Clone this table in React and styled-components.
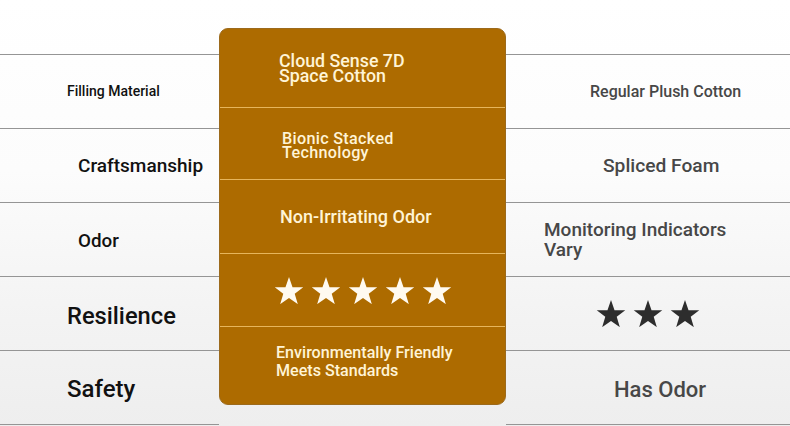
import React from "react";
import styled, { createGlobalStyle } from "styled-components";

const Global = createGlobalStyle`
  html, body { margin: 0; padding: 0; }
  body { font-family: Roboto, "Liberation Sans", sans-serif; }
`;

const Page = styled.div`
  display: flex;
  width: 790px;
  height: 426px;
  overflow: hidden;
  background: linear-gradient(180deg, #ffffff 0%, #fcfcfc 40%, #f3f3f3 75%, #eeeeee 100%);
`;

const SideColumn = styled.div`
  display: flex;
  flex-direction: column;
  padding-top: 54px;
  ${(p) => (p.$width ? `width: ${p.$width}px;` : "flex: 1;")}
`;

const Rows = styled.div`
  display: flex;
  flex-direction: column;
  border-bottom: 1px solid #959595;
`;

const Row = styled.div`
  box-sizing: border-box;
  height: 74px;
  border-top: 1px solid #959595;
  display: flex;
  align-items: center;
  padding-left: ${(p) => p.$pad}px;
  padding-top: ${(p) => p.$shift || 0}px;
`;

const Label = styled.div`
  font-size: ${(p) => p.$size}px;
  font-weight: 500;
  line-height: ${(p) => p.$lh || 1.2};
  color: ${(p) => p.$color || "#111"};
  white-space: nowrap;
`;

const Panel = styled.div`
  box-sizing: border-box;
  width: 287px;
  height: 377px;
  margin-top: 28px;
  background: #ad6b00;
  border: 1px solid #9c6a1c;
  border-radius: 9px;
  display: flex;
  flex-direction: column;
  overflow: hidden;
`;

const PanelRow = styled.div`
  box-sizing: border-box;
  height: ${(p) => p.$h}px;
  display: flex;
  align-items: center;
  padding-left: ${(p) => p.$pad}px;
  padding-top: ${(p) => p.$top || 0}px;
  padding-bottom: ${(p) => p.$bottom || 0}px;
  & + & {
    border-top: 1px solid #e6b55c;
  }
`;

const PanelText = styled.div`
  font-size: ${(p) => p.$size}px;
  font-weight: 500;
  line-height: ${(p) => p.$lh};
  color: #fff4d6;
  letter-spacing: ${(p) => p.$ls || 0}px;
  white-space: nowrap;
`;

const Stars = styled.div`
  display: flex;
  gap: ${(p) => p.$gap}px;
`;

function Star({ size, color }) {
  const R = size / 2;
  const r = R * 0.4;
  const pts = [];
  for (let i = 0; i < 10; i++) {
    const rad = i % 2 === 0 ? R : r;
    const a = (Math.PI / 5) * i - Math.PI / 2;
    pts.push(`${(R + rad * Math.cos(a)).toFixed(2)},${(R + rad * Math.sin(a)).toFixed(2)}`);
  }
  const h = R * (1 + Math.cos(Math.PI / 5));
  return (
    <svg width={size} height={h} viewBox={`0 0 ${size} ${h}`}>
      <polygon points={pts.join(" ")} fill={color} />
    </svg>
  );
}

function StarRow({ count, size, gap, color }) {
  return (
    <Stars $gap={gap}>
      {Array.from({ length: count }).map((_, i) => (
        <Star key={i} size={size} color={color} />
      ))}
    </Stars>
  );
}

export default function App() {
  return (
    <>
      <Global />
      <Page>
        <SideColumn $width={219}>
          <Rows>
            <Row $pad={67}>
              <Label $size={14}>Filling Material</Label>
            </Row>
            <Row $pad={78} $shift={1}>
              <Label $size={19}>Craftsmanship</Label>
            </Row>
            <Row $pad={78} $shift={3}>
              <Label $size={18.8}>Odor</Label>
            </Row>
            <Row $pad={67} $shift={6}>
              <Label $size={23.7}>Resilience</Label>
            </Row>
            <Row $pad={67} $shift={3}>
              <Label $size={24}>Safety</Label>
            </Row>
          </Rows>
        </SideColumn>

        <Panel>
          <PanelRow $h={78} $pad={59}>
            <PanelText $size={17.8} $lh={0.85}>
              Cloud Sense 7D
              <br />
              Space Cotton
            </PanelText>
          </PanelRow>
          <PanelRow $h={73} $pad={62} $top={6}>
            <PanelText $size={16.2} $lh={0.86} $ls={0.3}>
              Bionic Stacked
              <br />
              Technology
            </PanelText>
          </PanelRow>
          <PanelRow $h={74} $pad={60}>
            <PanelText $size={18} $lh={1.2}>Non-Irritating Odor</PanelText>
          </PanelRow>
          <PanelRow $h={74} $pad={54}>
            <StarRow count={5} size={30} gap={7} color="#fffaf0" />
          </PanelRow>
          <PanelRow $h={78} $pad={56} $bottom={8}>
            <PanelText $size={16.1} $lh={1.12}>
              Environmentally Friendly
              <br />
              Meets Standards
            </PanelText>
          </PanelRow>
        </Panel>

        <SideColumn>
          <Rows>
            <Row $pad={84}>
              <Label $size={16} $color="#474747">Regular Plush Cotton</Label>
            </Row>
            <Row $pad={97} $shift={1}>
              <Label $size={19.2} $color="#474747">Spliced Foam</Label>
            </Row>
            <Row $pad={38}>
              <Label $size={19} $lh={1.05} $color="#474747">
                Monitoring Indicators
                <br />
                Vary
              </Label>
            </Row>
            <Row $pad={90}>
              <StarRow count={3} size={30} gap={7} color="#2d2d2d" />
            </Row>
            <Row $pad={108} $shift={5}>
              <Label $size={22} $color="#474747">Has Odor</Label>
            </Row>
          </Rows>
        </SideColumn>
      </Page>
    </>
  );
}
